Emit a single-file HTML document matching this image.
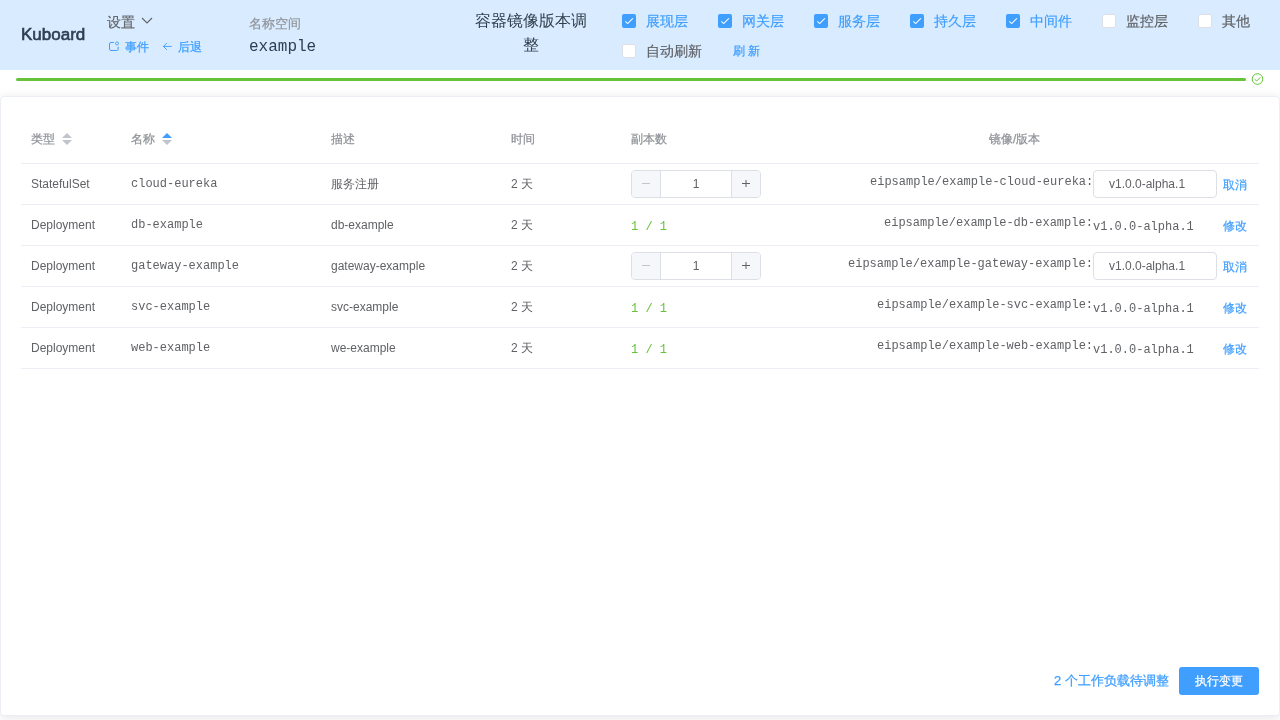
<!DOCTYPE html>
<html><head><meta charset="utf-8">
<style>
*{box-sizing:border-box}
html,body{margin:0;padding:0;width:1280px;height:720px;overflow:hidden;background:#fff;font-family:"Liberation Sans",sans-serif;color:#606266}
.abs{position:absolute;white-space:nowrap}
.mono{font-family:"Liberation Mono",monospace}
#hdr{position:absolute;left:0;top:0;width:1280px;height:70px;background:#d9ecff}
.logo{left:21px;top:25px;font-size:17px;font-weight:normal;-webkit-text-stroke:0.6px #2c3e50;color:#2c3e50;line-height:20px}
.cb{position:absolute;width:14px;height:14px;border-radius:2px;background:#409eff}
.cb.un{background:#fff;border:1px solid #dcdfe6}
.cb svg{position:absolute;left:0;top:0}
.cbl{position:absolute;font-size:14px;line-height:14px;color:#409eff;-webkit-text-stroke-width:0.2px}
.cbl.un{color:#606266}
#bar{position:absolute;left:16px;top:78px;width:1230px;height:3px;border-radius:2px;background:#67c23a}
#card{position:absolute;left:0;top:96px;width:1280px;height:620px;border:1px solid #ebeef5;border-radius:4px;background:#fff;box-shadow:0 2px 12px 0 rgba(0,0,0,.1)}
.hline{position:absolute;left:21px;width:1238px;height:1px;background:#ebeef5}
.th{position:absolute;font-size:12px;line-height:14px;color:#909399;font-weight:500;-webkit-text-stroke-width:0.25px}
.td{position:absolute;font-size:12px;line-height:14px;color:#606266;white-space:nowrap}
.sort{position:absolute;width:10px;height:12px}
.sort:before{content:"";position:absolute;left:0;top:0;border-left:5px solid transparent;border-right:5px solid transparent;border-bottom:5px solid #c0c4cc}
.sort:after{content:"";position:absolute;left:0;top:7px;border-left:5px solid transparent;border-right:5px solid transparent;border-top:5px solid #c0c4cc}
.sort.asc:before{border-bottom-color:#409eff}
.num{position:absolute;width:130px;height:28px;border:1px solid #dcdfe6;border-radius:4px;background:#fff}
.num .dec,.num .inc{position:absolute;top:0;width:29px;height:26px;background:#f5f7fa}
.num .dec{left:0;border-right:1px solid #dcdfe6;border-radius:3px 0 0 3px}
.num .inc{right:0;border-left:1px solid #dcdfe6;border-radius:0 3px 3px 0}
.num .v{position:absolute;left:29px;right:29px;top:0;height:26px;line-height:27px;text-align:center;font-size:12px;color:#606266}
.inp{position:absolute;width:124px;height:28px;border:1px solid #dcdfe6;border-radius:4px;background:#fff;font-size:12px;line-height:26px;padding-left:15px;color:#606266}
.link{position:absolute;font-size:12px;line-height:14px;color:#409eff;-webkit-text-stroke-width:0.2px}
.green{color:#67c23a}
#hdr,.td,.th,.link,.abs,.num,.inp,.cbl{will-change:transform}
</style></head><body>
<div id="hdr">
  <div class="abs logo">Kuboard</div>
  <div class="abs" style="left:107px;top:14.5px;font-size:14px;line-height:14px;color:#606266;-webkit-text-stroke-width:0.15px">设置</div>
  <svg class="abs" style="left:141px;top:16px" width="12" height="9" viewBox="0 0 12 9"><path d="M1 2 L6 7 L11 2" fill="none" stroke="#606266" stroke-width="1.1"/></svg>
  <svg class="abs" style="left:108px;top:41px" width="13" height="12" viewBox="0 0 13 12"><path d="M5.9 1.5 H3 Q1.5 1.5 1.5 3 V8 Q1.5 9.5 3 9.5 H8.7 Q10.2 9.5 10.2 8 V5.7" fill="none" stroke="#409eff" stroke-width="1"/><circle cx="9" cy="2.4" r="1.5" fill="none" stroke="#409eff" stroke-width="0.9"/></svg>
  <div class="abs" style="left:125px;top:40.5px;font-size:12px;line-height:12px;color:#409eff;-webkit-text-stroke:0.25px #409eff">事件</div>
  <svg class="abs" style="left:162px;top:41px" width="11" height="11" viewBox="0 0 11 11"><path d="M9.3 5.4 H1.5 M4.6 2.3 L1.4 5.4 L4.6 8.6" fill="none" stroke="#409eff" stroke-width="0.95" stroke-linecap="round" stroke-linejoin="round"/></svg>
  <div class="abs" style="left:178px;top:40.5px;font-size:12px;line-height:12px;color:#409eff;-webkit-text-stroke:0.25px #409eff">后退</div>
  <div class="abs" style="left:249px;top:17px;font-size:13px;line-height:13px;color:#909399;-webkit-text-stroke-width:0.2px">名称空间</div>
  <div class="abs mono" style="left:249px;top:38px;font-size:16px;line-height:18px;color:#2c3e50">example</div>
  <div class="abs" style="left:471px;top:9px;width:120px;white-space:normal;text-align:center;font-size:16px;line-height:24px;color:#2f3d4c">容器镜像版本调整</div>

  <div class="cb" style="left:622px;top:14px"><svg width="14" height="14"><path d="M3.3 7.4 L5.7 9.6 L10.8 4.4" fill="none" stroke="#fff" stroke-width="1.05"/></svg></div>
  <div class="cbl" style="left:646px;top:14px">展现层</div>
  <div class="cb" style="left:718px;top:14px"><svg width="14" height="14"><path d="M3.3 7.4 L5.7 9.6 L10.8 4.4" fill="none" stroke="#fff" stroke-width="1.05"/></svg></div>
  <div class="cbl" style="left:742px;top:14px">网关层</div>
  <div class="cb" style="left:814px;top:14px"><svg width="14" height="14"><path d="M3.3 7.4 L5.7 9.6 L10.8 4.4" fill="none" stroke="#fff" stroke-width="1.05"/></svg></div>
  <div class="cbl" style="left:838px;top:14px">服务层</div>
  <div class="cb" style="left:910px;top:14px"><svg width="14" height="14"><path d="M3.3 7.4 L5.7 9.6 L10.8 4.4" fill="none" stroke="#fff" stroke-width="1.05"/></svg></div>
  <div class="cbl" style="left:934px;top:14px">持久层</div>
  <div class="cb" style="left:1006px;top:14px"><svg width="14" height="14"><path d="M3.3 7.4 L5.7 9.6 L10.8 4.4" fill="none" stroke="#fff" stroke-width="1.05"/></svg></div>
  <div class="cbl" style="left:1030px;top:14px">中间件</div>
  <div class="cb un" style="left:1102px;top:14px"></div>
  <div class="cbl un" style="left:1126px;top:14px">监控层</div>
  <div class="cb un" style="left:1198px;top:14px"></div>
  <div class="cbl un" style="left:1222px;top:14px">其他</div>

  <div class="cb un" style="left:622px;top:44px"></div>
  <div class="cbl un" style="left:646px;top:44px">自动刷新</div>
  <div class="abs" style="left:733px;top:45px;font-size:12px;line-height:12px;color:#409eff;-webkit-text-stroke:0.25px #409eff">刷 新</div>
</div>

<div id="bar"></div>
<svg class="abs" style="left:1251px;top:72px" width="14" height="14" viewBox="0 0 14 14"><circle cx="6.5" cy="7" r="5.3" fill="none" stroke="#67c23a" stroke-width="1"/><path d="M3.7 7.2 L5.7 9 L9.3 5.4" fill="none" stroke="#67c23a" stroke-width="1"/></svg>

<div id="card"></div>

<!-- table -->
<div class="th" style="left:31px;top:132px">类型</div><div class="sort" style="left:62px;top:133px"></div>
<div class="th" style="left:131px;top:132px">名称</div><div class="sort asc" style="left:162px;top:133px"></div>
<div class="th" style="left:331px;top:132px">描述</div>
<div class="th" style="left:511px;top:132px">时间</div>
<div class="th" style="left:631px;top:132px">副本数</div>
<div class="th" style="left:989px;top:132px">镜像/版本</div>
<div class="hline" style="top:163px"></div>
<div class="hline" style="top:204px"></div>
<div class="hline" style="top:245px"></div>
<div class="hline" style="top:286px"></div>
<div class="hline" style="top:327px"></div>
<div class="hline" style="top:368px"></div>

<!-- row1 -->
<div class="td" style="left:31px;top:177px">StatefulSet</div>
<div class="td mono" style="left:131px;top:177px">cloud-eureka</div>
<div class="td" style="left:331px;top:177px">服务注册</div>
<div class="td" style="left:511px;top:177px">2 天</div>
<div class="num" style="left:631px;top:170px"><div class="dec"><svg width="29" height="26"><path d="M10 12.5 H18" stroke="#c0c4cc" stroke-width="1"/></svg></div><div class="v">1</div><div class="inc"><svg width="29" height="26"><path d="M10 12.5 H18 M14 9 V16" stroke="#606266" stroke-width="1"/></svg></div></div>
<div class="td mono" style="right:187px;top:175px">eipsample/example-cloud-eureka:</div>
<div class="inp" style="left:1093px;top:170px">v1.0.0-alpha.1</div>
<div class="link" style="left:1223px;top:178px">取消</div>

<!-- row2 -->
<div class="td" style="left:31px;top:218px">Deployment</div>
<div class="td mono" style="left:131px;top:218px">db-example</div>
<div class="td" style="left:331px;top:218px">db-example</div>
<div class="td" style="left:511px;top:218px">2 天</div>
<div class="td mono green" style="left:631px;top:220px">1 / 1</div>
<div class="td mono" style="right:187px;top:216px">eipsample/example-db-example:</div>
<div class="td mono" style="left:1093px;top:220px">v1.0.0-alpha.1</div>
<div class="link" style="left:1223px;top:219px">修改</div>

<!-- row3 -->
<div class="td" style="left:31px;top:259px">Deployment</div>
<div class="td mono" style="left:131px;top:259px">gateway-example</div>
<div class="td" style="left:331px;top:259px">gateway-example</div>
<div class="td" style="left:511px;top:259px">2 天</div>
<div class="num" style="left:631px;top:252px"><div class="dec"><svg width="29" height="26"><path d="M10 12.5 H18" stroke="#c0c4cc" stroke-width="1"/></svg></div><div class="v">1</div><div class="inc"><svg width="29" height="26"><path d="M10 12.5 H18 M14 9 V16" stroke="#606266" stroke-width="1"/></svg></div></div>
<div class="td mono" style="right:187px;top:257px">eipsample/example-gateway-example:</div>
<div class="inp" style="left:1093px;top:252px">v1.0.0-alpha.1</div>
<div class="link" style="left:1223px;top:260px">取消</div>

<!-- row4 -->
<div class="td" style="left:31px;top:300px">Deployment</div>
<div class="td mono" style="left:131px;top:300px">svc-example</div>
<div class="td" style="left:331px;top:300px">svc-example</div>
<div class="td" style="left:511px;top:300px">2 天</div>
<div class="td mono green" style="left:631px;top:302px">1 / 1</div>
<div class="td mono" style="right:187px;top:298px">eipsample/example-svc-example:</div>
<div class="td mono" style="left:1093px;top:302px">v1.0.0-alpha.1</div>
<div class="link" style="left:1223px;top:301px">修改</div>

<!-- row5 -->
<div class="td" style="left:31px;top:341px">Deployment</div>
<div class="td mono" style="left:131px;top:341px">web-example</div>
<div class="td" style="left:331px;top:341px">we-example</div>
<div class="td" style="left:511px;top:341px">2 天</div>
<div class="td mono green" style="left:631px;top:343px">1 / 1</div>
<div class="td mono" style="right:187px;top:339px">eipsample/example-web-example:</div>
<div class="td mono" style="left:1093px;top:343px">v1.0.0-alpha.1</div>
<div class="link" style="left:1223px;top:342px">修改</div>

<!-- footer -->
<div class="abs" style="left:1054px;top:674px;font-size:13px;line-height:14px;color:#409eff;font-weight:500;-webkit-text-stroke:0.25px #409eff">2 个工作负载待调整</div>
<div class="abs" style="left:1179px;top:667px;width:80px;height:28px;background:#409eff;border-radius:3px;color:#fff;font-size:12px;line-height:28px;text-align:center;-webkit-text-stroke:0.2px #fff">执行变更</div>
</body></html>
